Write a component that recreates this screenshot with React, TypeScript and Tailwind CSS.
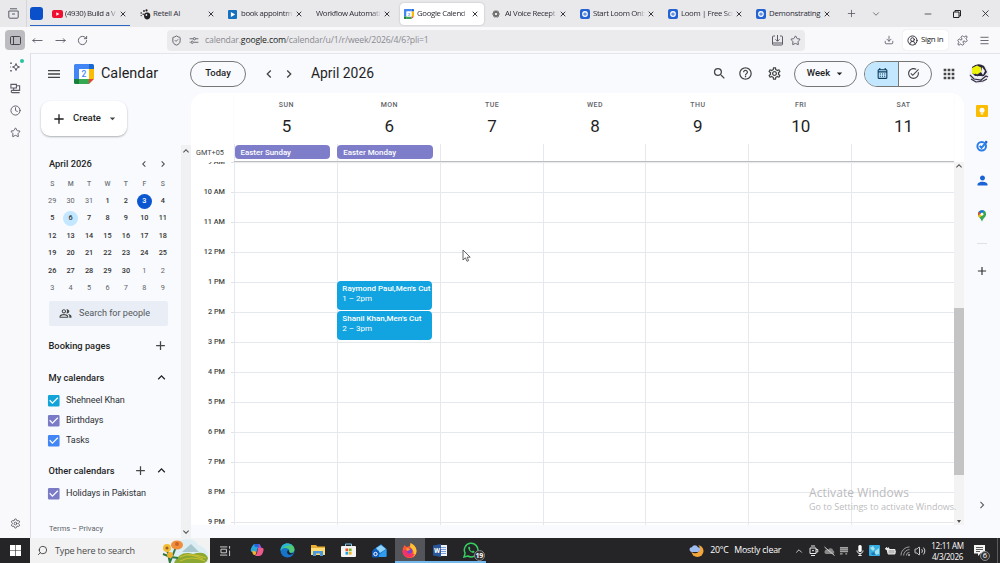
import type { ReactNode } from "react";
import clsx from "clsx";
import {
  MdAdd,
  MdApps,
  MdArrowDropDown,
  MdCheckBox,
  MdChevronLeft,
  MdChevronRight,
  MdHelpOutline,
  MdKeyboardArrowDown,
  MdKeyboardArrowUp,
  MdMenu,
  MdOutlineCalendarMonth,
  MdOutlinePeopleAlt,
  MdOutlineSettings,
  MdOutlineTaskAlt,
  MdPerson,
  MdSearch,
} from "react-icons/md";
import {
  ChevronDown,
  ChevronUp,
  CircleUserRound,
  Clock,
  Download,
  Menu,
  Minus,
  MoveLeft,
  MoveRight,
  Plus,
  Puzzle,
  RotateCw,
  Search,
  Settings,
  ShieldCheck,
  Star,
  Volume2,
  X,
} from "lucide-react";

const LoomIcon = () => (
  <svg viewBox="0 0 10 10" className="size-[10px]">
    <rect width="10" height="10" rx="2" fill="#2463d1" />
    <circle cx="5" cy="5" r="2.9" fill="#fff" />
    <circle cx="5" cy="5" r="1.6" fill="#2463d1" />
    <circle cx="5" cy="5" r="0.7" fill="#dce9ff" />
  </svg>
);

const YoutubeIcon = () => (
  <svg viewBox="0 0 11 8" className="h-[8px] w-[11px]">
    <rect width="11" height="8" rx="2" fill="#ee0f2f" />
    <path d="M4.3 2.2v3.6L7.4 4z" fill="#fff" />
  </svg>
);

const RetellIcon = () => (
  <svg viewBox="0 0 11 11" className="size-[11px]" fill="#222">
    <circle cx="1.2" cy="4" r="0.8" />
    <circle cx="1.2" cy="6.6" r="0.7" />
    <circle cx="3.2" cy="5.2" r="0.8" />
    <circle cx="4" cy="2" r="0.9" />
    <circle cx="6.5" cy="1.4" r="1.1" />
    <path d="M4 6.2C4 4 6 3 8 3.6c2 .5 2.6 2.3 2.2 4.2-.3 1.7-1.6 2.6-3.3 2.6C5 10.4 4 8.5 4 6.2z" />
    <circle cx="6.4" cy="6" r="0.9" fill="#e9e9ec" />
  </svg>
);

const BookIcon = () => (
  <svg viewBox="0 0 10 10" className="size-[9px]">
    <rect width="10" height="10" rx="1.2" fill="#1670c0" />
    <path d="M3.2 2.2 8 5 3.2 7.8z" fill="#fff" />
  </svg>
);

const AiIcon = () => (
  <svg viewBox="0 0 10 10" className="size-[8px]" fill="none" stroke="#666" strokeWidth="1.2">
    <ellipse cx="5" cy="5" rx="4.2" ry="2.2" />
    <ellipse cx="5" cy="5" rx="4.2" ry="2.2" transform="rotate(60 5 5)" />
    <ellipse cx="5" cy="5" rx="4.2" ry="2.2" transform="rotate(120 5 5)" />
  </svg>
);

function CalendarLogo({ className }: { className: string }) {
  return (
    <svg viewBox="0 0 20 20" className={className}>
      <path d="M1.5 0H15v5H5v10H0V1.5A1.5 1.5 0 0 1 1.5 0z" fill="#4285f4" />
      <path d="M15 0h3.5A1.5 1.5 0 0 1 20 1.5V5h-5z" fill="#1967d2" />
      <path d="M15 5h5v10h-5z" fill="#fbbc04" />
      <path d="M5 15h10v5H5z" fill="#34a853" />
      <path d="M0 15h5v5H1.5A1.5 1.5 0 0 1 0 18.5z" fill="#188038" />
      <path d="M15 15h5l-5 5z" fill="#ea4335" />
      <path d="M5 5h10v10H5z" fill="#fff" />
      <text x="10" y="13" textAnchor="middle" fontSize="8.5" fontWeight="500" fontFamily="Roboto, sans-serif" fill="#4285f4">
        2
      </text>
    </svg>
  );
}

interface TabItem {
  title: string;
  icon?: ReactNode;
  active?: boolean;
}

const tabs: TabItem[] = [
  { title: "(4930) Build a V", icon: <YoutubeIcon /> },
  { title: "Retell AI", icon: <RetellIcon /> },
  { title: "book appointm", icon: <BookIcon /> },
  { title: "Workflow Automati" },
  { title: "Google Calend", icon: <CalendarLogo className="size-[10px]" />, active: true },
  { title: "AI Voice Recept", icon: <AiIcon /> },
  { title: "Start Loom Onb", icon: <LoomIcon /> },
  { title: "Loom | Free Scr", icon: <LoomIcon /> },
  { title: "Demonstrating", icon: <LoomIcon /> },
];

function TabStrip() {
  return (
    <div className="flex h-[27px] items-center bg-[#e9e9ec] text-[#2b2a33]">
      <div className="flex h-full w-[27px] items-center justify-center border-r border-[#d5d5da]">
        <svg viewBox="0 0 11 11" className="size-[11px]" fill="none" stroke="#5b5b66">
          <path d="M2 .8h7M.8 3h9.4v6.2a1 1 0 0 1-1 1H1.8a1 1 0 0 1-1-1zM4 6h3" />
        </svg>
      </div>
      <div className="flex h-full w-[21px] flex-col pt-[7px]">
        <div className="ml-[3px] size-[13px] rounded-[3px] bg-[#0b50cb]" />
        <div className="mt-[5px] ml-[3px] h-px bg-[#2b66c4]" />
      </div>
      {tabs.map((tab, i) => (
        <div key={tab.title} className="flex h-full w-[88px] flex-col">
          <div
            className={clsx(
              "mt-[3px] flex h-[22px] w-[84px] items-center rounded-[4px] pl-[4px]",
              tab.active && "bg-white shadow-[0_0_2px_rgba(0,0,0,0.25)]",
            )}
          >
            {tab.icon && <span className="flex w-[13px] shrink-0 items-center">{tab.icon}</span>}
            <span
              className={clsx(
                "min-w-0 flex-1 text-[7.8px] whitespace-nowrap",
                i === 1 || i === 8 ? "tracking-[-0.25px]" : "tracking-[-0.35px] [mask-image:linear-gradient(to_right,black_85%,transparent)]",
              )}
            >
              {tab.title}
            </span>
            <X className="mr-[5px] ml-[2px] size-[8px] shrink-0" strokeWidth={2.8} />
          </div>
          {i === 0 && <div className="h-px w-[82px] bg-[#2b66c4]" />}
        </div>
      ))}
      <Plus className="ml-[6px] size-[11px] text-[#5b5b66]" strokeWidth={1.8} />
      <ChevronDown className="ml-[14px] size-[10px] text-[#5b5b66]" />
      <Minus className="ml-[42px] size-[10px]" strokeWidth={1.8} />
      <svg viewBox="0 0 8 8" className="ml-[20px] size-[8px]" fill="none" stroke="#222">
        <path d="M.5 2h5.5v5.5H.5zM2 2V.5h5.5V6H6" />
      </svg>
      <X className="ml-[19px] size-[11px]" strokeWidth={1.9} />
    </div>
  );
}

function NavBar() {
  return (
    <div className="flex h-[26px] items-center bg-[#f9f9fb] text-[#5b5b66]">
      <div className="ml-[5px] flex size-[20px] items-center justify-center rounded-[4px] bg-[#bdbdc1]">
        <svg viewBox="0 0 11 9" className="h-[9px] w-[11px]" fill="none" stroke="#45454d">
          <rect x=".5" y=".5" width="10" height="8" rx="1" />
          <path d="M3.5 .5v8" />
        </svg>
      </div>
      <MoveLeft className="ml-[7px] size-[11px]" />
      <MoveRight className="ml-[12px] size-[11px]" />
      <RotateCw className="ml-[11px] size-[11px]" />
      <div className="ml-[79px] flex h-[21px] w-[638px] items-center rounded-[4px] bg-[#ebebed] pl-[4px]">
        <ShieldCheck className="size-[11px]" />
        <svg viewBox="0 0 10 8" className="ml-[7px] h-[7px] w-[10px]" fill="none" stroke="#5b5b66">
          <path d="M0 2h4M7 2h3M0 6h1M5 6h5" />
          <circle cx="5.5" cy="2" r="1.3" />
          <circle cx="3" cy="6" r="1.3" />
        </svg>
        <span className="ml-[6px] flex-1 pt-[2px] text-[8.7px] tracking-[-0.17px] text-[#8a8a91]">
          calendar.<span className="text-[#222]">google.com</span>/calendar/u/1/r/week/2026/4/6?pli=1
        </span>
        <svg viewBox="0 0 11 11" className="size-[11px]" fill="none" stroke="#5b5b66">
          <path d="M3 1H1.5a1 1 0 0 0-1 1v7a1 1 0 0 0 1 1h8a1 1 0 0 0 1-1V2a1 1 0 0 0-1-1H8M.5 8h10M5.5 0v6M3.5 4.3l2 2 2-2" />
        </svg>
        <Star className="mr-[4px] ml-[7px] size-[11px]" />
      </div>
      <Download className="ml-[79px] size-[10px]" />
      <div className="ml-[9px] flex h-[20px] w-[45px] items-center rounded-[3px] bg-white pl-[4px] shadow-[0_0_1px_rgba(0,0,0,0.2)]">
        <CircleUserRound className="size-[11px] text-[#2b2a33]" />
        <span className="ml-[3px] text-[7.9px] tracking-[-0.3px] whitespace-nowrap text-[#15141a]">Sign in</span>
      </div>
      <Puzzle className="ml-[9px] size-[11px]" />
      <Menu className="ml-[11px] size-[11px]" />
    </div>
  );
}

function FirefoxRail() {
  return (
    <div className="flex w-[31px] flex-col items-center border-r border-[#dcdce2] bg-[#f9f9fb] pt-[8px] text-[#5b5b66]">
      <div className="relative">
        <svg viewBox="0 0 12 12" className="size-[12px]" fill="none" stroke="#5b5b66">
          <path d="M7 2.5 8 5l2.5 1L8 7 7 9.5 6 7 3.5 6 6 5zM2 1.5v1.5M1.2 2.2h1.6M2 9v1.5M1.2 9.8h1.6M1 6h.8" />
        </svg>
        <span className="absolute -top-[2px] -right-[3px] size-[4px] rounded-full bg-[#2ac3a2]" />
      </div>
      <svg viewBox="0 0 12 12" className="mt-[10px] size-[11px]" fill="none" stroke="#5b5b66">
        <path d="M1 1.5h6v4H1zM7 3h3.5v5H4V5.5M2 10.5h8.5M1.5 8v2.5M4 8H1.5" strokeWidth="1.2" />
      </svg>
      <Clock className="mt-[11px] size-[11px]" />
      <Star className="mt-[11px] size-[11px]" />
      <Settings className="mt-auto mb-[9px] size-[11px]" />
    </div>
  );
}

function CalendarHeader() {
  return (
    <header className="flex h-[39px] items-center text-[#1f1f1f]">
      <MdMenu className="ml-[15px] size-[16px] text-[#444746]" />
      <CalendarLogo className="ml-[12px] size-[20px]" />
      <span className="ml-[7px] w-[89px] text-[14.4px]">Calendar</span>
      <button className="h-[26px] w-[56px] rounded-full border border-[#747775] text-[9.5px] font-medium">Today</button>
      <MdChevronLeft className="ml-[15px] size-[16px] text-[#444746]" />
      <MdChevronRight className="ml-[4px] size-[16px] text-[#444746]" />
      <span className="ml-[14px] flex-1 text-[13.9px]">April 2026</span>
      <MdSearch className="size-[15px] text-[#444746]" />
      <MdHelpOutline className="ml-[11px] size-[15px] text-[#444746]" />
      <MdOutlineSettings className="ml-[14px] size-[15px] text-[#444746]" />
      <button className="ml-[12px] flex h-[26px] w-[63px] items-center justify-center rounded-full border border-[#747775] text-[9.5px] font-medium">
        Week
        <MdArrowDropDown className="-mr-[2px] ml-[3px] size-[13px]" />
      </button>
      <div className="ml-[7px] flex h-[26px] w-[68px] overflow-hidden rounded-full border border-[#747775] text-[#444746]">
        <div className="flex w-[34px] items-center justify-center border-r border-[#747775] bg-[#c2e7ff] pl-[2px] text-[#0b3a5c]">
          <MdOutlineCalendarMonth className="size-[13px]" />
        </div>
        <div className="flex flex-1 items-center justify-center pr-[4px]">
          <MdOutlineTaskAlt className="size-[13px]" />
        </div>
      </div>
      <MdApps className="ml-[9px] size-[16px] text-[#444746]" />
      <svg viewBox="0 0 20 20" className="mr-[11px] ml-[12px] size-[20px]">
        <circle cx="10" cy="10" r="9.8" fill="#eceaf2" />
        <path d="M3 3Q9-2 15 2l3 6-3 4-8 1-4-4z" fill="#29263c" />
        <path d="M3 4l5-2.5 4 2v4.5l-4 2.5-5-1z" fill="#eef20a" />
        <path d="M13 3l3 4-2 4-2-3zM5 12l8 0-2 3-4-1z" fill="#f1eff5" />
        <path d="M1 11l4 4 7 1 5-4 2 1M2 15l5 3 7-1 4-2M6 10l3 2" stroke="#302c42" strokeWidth="1.2" fill="none" />
      </svg>
    </header>
  );
}

const weeks = [
  [29, 30, 31, 1, 2, 3, 4],
  [5, 6, 7, 8, 9, 10, 11],
  [12, 13, 14, 15, 16, 17, 18],
  [19, 20, 21, 22, 23, 24, 25],
  [26, 27, 28, 29, 30, 1, 2],
  [3, 4, 5, 6, 7, 8, 9],
];

function MiniCalendar() {
  return (
    <div className="ml-[12px] w-[129px]">
      <div className="-mt-px flex h-[19px] items-center pl-[6px] text-[#1f1f1f]">
        <span className="flex-1 text-[9.3px] font-medium">April 2026</span>
        <MdChevronLeft className="size-[12px] text-[#444746]" />
        <MdChevronRight className="mr-[3px] ml-[7px] size-[12px] text-[#444746]" />
      </div>
      <div className="mt-[2px] grid grid-cols-7 text-center text-[7.3px]">
        {["S", "M", "T", "W", "T", "F", "S"].map((d, i) => (
          <span key={i} className="h-[17.5px] text-[6.8px] leading-[18.5px] font-medium text-[#70757a]">
            {d}
          </span>
        ))}
        {weeks.flat().map((d, i) => {
          const outside = i < 3 || i > 32;
          return (
            <span key={i} className="flex h-[17.5px] items-center justify-center">
              <span
                className={clsx(
                  "flex size-[15px] items-center justify-center rounded-full",
                  outside ? "text-[#5f6368]" : "font-medium text-[#333]",
                  i === 5 && "bg-[#0b57d0] text-white",
                  i === 8 && "bg-[#c2e7ff] text-[#004a77]",
                )}
              >
                {d}
              </span>
            </span>
          );
        })}
      </div>
    </div>
  );
}

function CalendarItem({ name, color }: { name: string; color: string }) {
  return (
    <div className="flex h-[20px] items-center">
      <MdCheckBox className="-ml-[2px] size-[15.5px]" color={color} />
      <span className="ml-[4.5px] text-[9.1px] tracking-[-0.1px] whitespace-nowrap text-[#303236]">{name}</span>
    </div>
  );
}

function Sidebar() {
  return (
    <aside className="flex w-[160px] flex-col">
      <button className="mt-[8px] ml-[10px] flex h-[35px] w-[86px] items-center rounded-[9px] bg-white text-[9.5px] font-medium text-[#1f1f1f] shadow-[0_1px_2px_rgba(60,64,67,0.4)]">
        <MdAdd className="ml-[10px] size-[16px]" />
        <span className="ml-[6px]">Create</span>
        <MdArrowDropDown className="ml-[5px] size-[13px] text-[#444746]" />
      </button>
      <div className="mt-[9px] flex h-[393px]">
        <div className="w-[150px] pt-[10px]">
          <MiniCalendar />
          <div className="mt-[3px] ml-[18px] flex h-[25px] w-[119px] items-center rounded-[2px] bg-[#e9eef6] text-[9.1px] text-[#53575b]">
            <MdOutlinePeopleAlt className="ml-[10px] size-[13px] text-[#444746]" />
            <span className="ml-[7px] pt-px">Search for people</span>
          </div>
          <div className="mt-[10px] ml-[17.5px] flex h-[20px] items-center text-[9.3px] font-medium text-[#1f1f1f]">
            <span className="w-[104px]">Booking pages</span>
            <MdAdd className="size-[15px] text-[#444746]" />
          </div>
          <div className="mt-[12px] ml-[17.5px] flex h-[20px] items-center text-[9.3px] font-medium text-[#1f1f1f]">
            <span className="w-[105px]">My calendars</span>
            <MdKeyboardArrowUp className="size-[15px]" />
          </div>
          <div className="mt-[3px] ml-[17px]">
            <CalendarItem name="Shehneel Khan" color="#12a4d9" />
            <CalendarItem name="Birthdays" color="#7b7ac6" />
            <CalendarItem name="Tasks" color="#4285f4" />
          </div>
          <div className="mt-[10px] ml-[17.5px] flex h-[20px] items-center text-[9.3px] font-medium text-[#1f1f1f]">
            <span className="w-[84px] whitespace-nowrap">Other calendars</span>
            <MdAdd className="size-[15px] text-[#444746]" />
            <MdKeyboardArrowUp className="ml-[6px] size-[15px]" />
          </div>
          <div className="mt-[3px] ml-[17px]">
            <CalendarItem name="Holidays in Pakistan" color="#7b7ac6" />
          </div>
          <div className="mt-[20px] ml-[18px] text-[7.5px] leading-[10px] text-[#5f6368]">Terms – Privacy</div>
        </div>
        <div className="flex w-[10px] flex-col items-center justify-between bg-[#f0f1f3] text-[#505050]">
          <MdKeyboardArrowUp className="size-[12px]" />
          <MdKeyboardArrowDown className="size-[12px]" />
        </div>
      </div>
    </aside>
  );
}

const days = [
  { name: "SUN", date: 5, allDay: "Easter Sunday" },
  { name: "MON", date: 6, allDay: "Easter Monday" },
  { name: "TUE", date: 7 },
  { name: "WED", date: 8 },
  { name: "THU", date: 9 },
  { name: "FRI", date: 10 },
  { name: "SAT", date: 11 },
];

const hours = ["9 AM", "10 AM", "11 AM", "12 PM", "1 PM", "2 PM", "3 PM", "4 PM", "5 PM", "6 PM", "7 PM", "8 PM", "9 PM"];

const events = [
  { title: "Raymond Paul,Men's Cut", time: "1 – 2pm", top: 118 },
  { title: "Shanil Khan,Men's Cut", time: "2 – 3pm", top: 148 },
];

function WeekView() {
  return (
    <main className="mb-[13px] flex w-[773px] flex-col overflow-hidden rounded-t-[14px] bg-white text-[#1f1f1f]">
      <div className="flex h-[69px]">
        <div className="w-[43px] pt-[54px] pl-[5px] text-[7.3px] leading-[11px] text-[#444746]">GMT+05</div>
        <div className="grid w-[720px] grid-cols-7 border-b border-[#b9bcc0] shadow-[0_1px_1px_rgba(0,0,0,0.08)]">
          {days.map((day) => (
            <div key={day.name} className="flex flex-col items-center">
              <span className="mt-[7px] pl-[2px] text-[7px] leading-[11px] font-medium tracking-[0.45px] text-[#5f6368]">{day.name}</span>
              <span className="mt-[4px] pl-[2px] text-[17px] leading-[22px]">{day.date}</span>
              <div className="mt-auto h-[17px] w-full border-l border-[#e5e8ec]">
                {day.allDay && (
                  <div className="mt-px -ml-[0.5px] h-[14px] w-[95.5px] rounded-[4px] bg-[#7e7dca] pl-[6px] text-[7.9px] leading-[15px] font-medium text-white">
                    {day.allDay}
                  </div>
                )}
              </div>
            </div>
          ))}
        </div>
      </div>
      <div className="flex h-[363px] overflow-hidden">
        <div className="-mt-[15px] w-[43px]">
          {hours.map((hour) => (
            <div key={hour} className="flex h-[30px] items-center text-[7.3px] text-[#444746]">
              <span className="flex-1 pt-px text-right font-medium">{hour}</span>
              <span className="ml-[6px] h-px w-[3px] bg-[#dfe3e8]" />
            </div>
          ))}
        </div>
        <div className="grid w-[720px] grid-cols-7 pt-px">
          {days.map((day) => (
            <div key={day.name} className="relative border-l border-[#e5e8ec]">
              {hours.slice(1).map((hour) => (
                <div key={hour} className="h-[30px] border-b border-[#e5e9ee]" />
              ))}
              {day.name === "MON" &&
                events.map((event) => (
                  <div
                    key={event.title}
                    className="absolute -left-px h-[29px] w-[95px] overflow-hidden rounded-[4px] bg-[#12a4e0] pt-[3px] pl-[5.5px] text-[8px] leading-[9.5px] whitespace-nowrap text-white"
                    style={{ top: event.top }}
                  >
                    <p className="font-medium">{event.title}</p>
                    <p>{event.time}</p>
                  </div>
                ))}
            </div>
          ))}
        </div>
        <div className="flex w-[10px] flex-col items-center bg-[#f3f3f4] text-[#505050]">
          <MdKeyboardArrowUp className="-mt-[2px] size-[12px] shrink-0" />
          <div className="mt-[136px] h-[167px] w-[10px] shrink-0 bg-[#c4c4c5]" />
          <svg viewBox="0 0 4 3" className="mt-[45px] h-[3px] w-[4px]">
            <path d="M0 0h4L2 3z" fill="#505050" />
          </svg>
        </div>
      </div>
    </main>
  );
}

function SidePanel() {
  return (
    <div className="flex w-[36px] flex-col items-center pt-[12px]">
      <svg viewBox="0 0 12 12" className="size-[12px]">
        <rect width="12" height="12" rx="1.2" fill="#fbbc04" />
        <circle cx="6" cy="5.3" r="2.5" fill="#fff" />
        <path d="M4.8 8.3h2.4v1.2H4.8z" fill="#fff" />
      </svg>
      <svg viewBox="0 0 12 12" className="mt-[23px] size-[12px]" fill="none">
        <circle cx="5.7" cy="6.3" r="4.3" stroke="#2b7de9" strokeWidth="2" />
        <path d="M3.7 5.9 5.5 7.7 10.5 2.2" stroke="#2b7de9" strokeWidth="2" />
        <path d="m9.5 1 1.7 1.6" stroke="#1558c0" strokeWidth="1.5" />
      </svg>
      <MdPerson className="mt-[21px] size-[15px] text-[#1a62d6]" />
      <svg viewBox="0 0 10 13" className="mt-[22px] h-[12px] w-[10px]">
        <path d="M5 .3A4.4 4.4 0 0 0 .6 4.7C.6 8 4 9 5 12.8 6 9 9.4 8 9.4 4.7A4.4 4.4 0 0 0 5 .3z" fill="#34a853" />
        <path d="M5 .3A4.4 4.4 0 0 0 1.6 2L4 4.2 7.5.9A4 4 0 0 0 5 .3z" fill="#1a73e8" />
        <path d="M1.6 2A4.4 4.4 0 0 0 .7 5.5L4 4.2z" fill="#ea4335" />
        <path d="M.8 6c.4 1 1 1.7 1.6 2.4L5.5 5.5 4 4z" fill="#fbbc04" />
        <circle cx="5" cy="4.6" r="1.5" fill="#fff" />
      </svg>
      <div className="mt-[21px] h-px w-[10px] bg-[#dfe1e5]" />
      <MdAdd className="mt-[20px] size-[14px] text-[#333]" />
      <MdChevronRight className="mt-auto mb-[26px] size-[14px] text-[#5f6368]" />
    </div>
  );
}

const apps: { name: string; state?: string; icon: ReactNode }[] = [
  {
    name: "Copilot",
    icon: (
      <svg viewBox="0 0 14 14" className="size-[14px]">
        <path d="M4 1h5L6.5 9H2.5C0 9 .5 6 2 3.5z" fill="#28a7dd" />
        <path d="M4 1h5l-.8 3H5z" fill="#2463d8" />
        <path d="M2.5 7.5 6.5 9 5.5 12C3 12 2 10.5 2.5 7.5z" fill="#f0b52e" />
        <path d="M8 5h4c2 0 2 2 .7 5-.7 2-2 3-3.7 3H5l2-3z" fill="#ec5b8b" />
        <path d="M9 1c1.5 0 1.5 3 3 4H8z" fill="#9859dc" />
      </svg>
    ),
  },
  {
    name: "Edge",
    icon: (
      <svg viewBox="0 0 16 16" className="size-[15px]">
        <circle cx="8" cy="8" r="7.5" fill="#1475ca" />
        <path d="M.6 8C1 3 4 .5 8 .5c4.5 0 7.5 3.2 7.5 6.5 0 2-1.5 3.5-3.5 3.5-3 0-2-1.5-2-2.5C10 5.5 3.5 3.5.6 8z" fill="#4fc878" />
        <path d="M.6 8C1 3 4 .5 8 .5c2 0 3.5.5 5 2C8 2 3.5 4 .6 8z" fill="#27b4df" />
        <path d="M9.5 8.5c0 2.5 3 3 5 2-1 1-2.5 2.5-4.5 2-3-1-3-4-1-5z" fill="#201f22" />
      </svg>
    ),
  },
  {
    name: "Explorer",
    icon: (
      <svg viewBox="0 0 14 12" className="h-[12px] w-[14px]">
        <path d="M0 1h5l1.5 1.5H14V11H0z" fill="#e9ae32" />
        <path d="M0 4h14v7H0z" fill="#ffdc76" />
        <path d="M2 7h10v5H9V9.5H5V12H2z" fill="#4a9add" />
      </svg>
    ),
  },
  {
    name: "Store",
    icon: (
      <svg viewBox="0 0 15 14" className="h-[14px] w-[15px]">
        <path d="M4.5 4V1h6v3" stroke="#7fc6ed" fill="none" />
        <rect y="3" width="15" height="11" rx="1" fill="#f4f4f4" />
        <path d="M4.5 5.5h2.7v2.7H4.5z" fill="#e8502b" />
        <path d="M7.9 5.5h2.7v2.7H7.9z" fill="#7bb51c" />
        <path d="M4.5 8.9h2.7v2.7H4.5z" fill="#1ea0e5" />
        <path d="M7.9 8.9h2.7v2.7H7.9z" fill="#f6b412" />
      </svg>
    ),
  },
  {
    name: "Mail",
    icon: (
      <svg viewBox="0 0 15 15" className="size-[15px]">
        <path d="m1 7 8-6 5.5 5v8H2z" fill="#1268c3" />
        <path d="m4 5 5-3 5 4-6 4z" fill="#8fd3fa" />
        <path d="M4 14 14.5 6v7q0 1-1.5 1z" fill="#2e9df0" />
        <rect y="7.5" width="7" height="7" rx="1" fill="#1057b7" />
        <circle cx="3.5" cy="11" r="1.7" stroke="#fff" fill="none" />
      </svg>
    ),
  },
  {
    name: "Firefox",
    state: "bg-[#54555a] border-[#76b9ed]",
    icon: (
      <svg viewBox="0 0 15 15" className="size-[15px]">
        <path d="M1 5 2.5 2l2 2L8 3l.5-3c3.5 1.5 6 4.5 6 8A7 7 0 0 1 .5 8.5z" fill="#ff5634" />
        <path d="M8.5 0c3.5 1.5 6 4.5 6 8a7 7 0 0 1-4 6c2-3 1.5-7-2.5-10z" fill="#ffc233" />
        <path d="M.5 8c.5 6 8 9 12.5 3-3 1-9 0-8-5z" fill="#f5316a" />
        <circle cx="7.7" cy="8" r="2.7" fill="#7c43c8" />
        <path d="M4 5.5c2-1.5 4 0 4 1.5L5 8z" fill="#ff9a26" />
      </svg>
    ),
  },
  {
    name: "Word",
    state: "border-[#76b9ed]",
    icon: (
      <svg viewBox="0 0 14 13" className="h-[13px] w-[14px]">
        <rect x="6" y="1" width="8" height="11" fill="#eef3fb" />
        <path d="M8 3.5h5M8 5.5h5M8 7.5h5M8 9.5h5" stroke="#5c86c9" strokeWidth=".8" />
        <path d="M0 1.5 8 0v13l-8-1.5z" fill="#2a5699" />
        <text x="4" y="9" textAnchor="middle" fontSize="7" fontWeight="700" fontFamily="Roboto, sans-serif" fill="#fff">
          W
        </text>
      </svg>
    ),
  },
  {
    name: "WhatsApp",
    state: "border-[#76b9ed]",
    icon: (
      <div className="relative">
        <svg viewBox="0 0 16 16" className="size-[16px]" fill="none" stroke="#35cf61">
          <path d="M1 15l1.1-3.8A6.8 6.8 0 1 1 4.8 14z" strokeWidth="1.5" />
          <path d="M5.5 4.8c-1 1.2.8 5.5 4.6 6.1 1 0 1.6-.8 1.5-1.5L10 8.6l-1 .8C8 9 7.2 8 6.8 7l.6-.8-.7-1.5z" fill="#35cf61" stroke="none" />
        </svg>
        <span className="absolute -right-[6px] -bottom-[3px] flex size-[11px] items-center justify-center rounded-full border border-[#888] bg-[#333] text-[7px] leading-none font-bold tracking-[-0.3px] text-white">
          19
        </span>
      </div>
    ),
  },
];

function Tray() {
  return (
    <div className="flex text-[#e8e8e8]">
      {[
        <ChevronUp className="size-[10px]" />,
        <svg viewBox="0 0 10 11" className="h-[11px] w-[10px]" fill="none" stroke="currentColor">
          <path d="M1 3h6v5.5H1zM7 4.5h1.8v2.5H7M2 1h4M2 10.5h4M3 5.7h2" />
        </svg>,
        <svg viewBox="0 0 11 10" className="h-[10px] w-[11px]">
          <path d="M.5 5.5C1 3 3 3 4 4c1-2.5 5-2 5 .5 2 .5 1.5 3.5 0 3.5H2C1 8 .3 7 .5 5.5z" fill="#8a8a8a" />
          <path d="m.5 1 10 8.5" stroke="#d0d0d0" />
        </svg>,
        <svg viewBox="0 0 11 10" className="h-[9px] w-[10px]" fill="#a5a5a5">
          <path d="M1 1h9v6H1zM1 8h3v1.5H1zM7 8h2v1.5H7z" />
          <path d="M1 3h9M1 5h9" stroke="#555" strokeWidth=".7" />
        </svg>,
        <svg viewBox="0 0 8 11" className="h-[11px] w-[8px]" fill="#fff">
          <rect x="2.3" width="3.4" height="7" rx="1.5" />
          <path d="M1 5.5c0 4 6 4 6 0M4 8.5V10.5M2.3 10.5h3.4" stroke="#eee" fill="none" />
        </svg>,
        <svg viewBox="0 0 11 11" className="size-[11px]">
          <rect width="11" height="11" rx="1" fill="#36aee4" />
          <path d="M1 3 4 1l2 3-2 2zM6 6l4-3v6l-4 1z" fill="#a4e0e5" />
          <path d="m2 8 3-1 2 3H3z" fill="#1e7bb7" />
        </svg>,
        <svg viewBox="0 0 11 8" className="h-[8px] w-[11px]" fill="#e8e8e8">
          <path d="M3 2.5h7v4.500H3z" stroke="#e8e8e8" fill="#bbb" />
          <path d="M10.300 4h.7v1.500h-.7zM0 1h1V0h.8v1h1V0h.8v1h.8v1.500L3 3.500v2H2v-2L.500 2.500z" />
        </svg>,
        <svg viewBox="0 0 11 11" className="size-[10px]" fill="none" stroke="#aaa">
          <path d="M1 10.5A9.5 9.5 0 0 1 10.5 1M4 10.5A6.5 6.5 0 0 1 10.5 4M7 10.5A3.5 3.5 0 0 1 10.5 7" />
          <circle cx="10" cy="10" r=".8" fill="#eee" />
        </svg>,
        <Volume2 className="size-[12px]" strokeWidth={1.8} />,
      ].map((icon, i) => (
        <span key={i} className="flex w-[15.2px] items-center justify-center">
          {icon}
        </span>
      ))}
    </div>
  );
}

function Taskbar() {
  return (
    <footer className="flex h-[25px] items-center bg-[#252426] text-white">
      <div className="flex w-[30px] justify-center">
        <svg viewBox="0 0 11 11" className="size-[11px]" fill="#fff">
          <path d="M0 0h5.2v5.2H0zM5.8 0H11v5.2H5.8zM0 5.8h5.2V11H0zM5.8 5.8H11V11H5.8z" />
        </svg>
      </div>
      <div className="flex h-full w-[180px] items-center bg-[#f2f2f3]">
        <Search className="ml-[7px] size-[11px] -scale-x-100 text-[#333]" strokeWidth={1.8} />
        <span className="ml-[7px] flex-1 text-[9.1px] tracking-[-0.2px] whitespace-nowrap text-[#4a4a4a]">Type here to search</span>
        <svg viewBox="0 0 48 25" className="h-[25px] w-[48px]">
          <path d="M8 10Q18 0 27 1q7 1 9 6 6 1 10 8v9H8z" fill="#dceef3" />
          <path d="m20 14 9-8 8 8z" fill="#a8c7cf" />
          <path d="M12 25q6-13 19-9 12-4 15 4-1 5-5 5z" fill="#8aa832" />
          <path d="M18 19q10-5 26 1M18 23q12-6 25 0M23 17q8-1 18 4" stroke="#c9bf30" strokeWidth="1.2" fill="none" />
          <path d="M14 9 8 24M5 11l3 14M6 18l-5-2M9 19l7 1" stroke="#2e7740" strokeWidth="2" fill="none" />
          <ellipse cx="15" cy="7" rx="6" ry="4.5" fill="#f08f3b" />
          <circle cx="15" cy="6" r="2" fill="#c9632b" />
          <circle cx="5" cy="10" r="4" fill="#f5bd34" />
          <circle cx="5" cy="10" r="1.6" fill="#99602a" />
          <circle cx="8" cy="17" r="3" fill="#f1b02d" />
        </svg>
      </div>
      <div className="mr-[2px] flex w-[30px] justify-center">
        <svg viewBox="0 0 12 11" className="h-[10px] w-[11px]" fill="none" stroke="#ddd">
          <path d="M0 1h8M1 3.5h6v4H1zM0 10h8M10.5 0v3M10.5 5v6" />
        </svg>
      </div>
      {apps.map((app) => (
        <div
          key={app.name}
          className={clsx("flex h-full w-[30.5px] items-center justify-center border-b-2 pt-[1px]", app.state ?? "border-transparent")}
        >
          {app.icon}
        </div>
      ))}
      <svg viewBox="0 0 16 16" className="ml-auto size-[15px]">
        <circle cx="9" cy="8.5" r="6.5" fill="#f4a63a" />
        <circle cx="6.5" cy="6" r="5" fill="#252426" />
        <path d="M3 9.5a2.5 2.5 0 0 1 0-5 3.5 3.5 0 0 1 6.5 0 2.5 2.5 0 0 1 0 5z" fill="#9fbcf0" />
      </svg>
      <span className="ml-[6px] w-[24px] text-[8.8px] tracking-[-0.3px]">20°C</span>
      <span className="mr-[10px] w-[47px] text-[8.8px] tracking-[-0.2px] whitespace-nowrap">Mostly clear</span>
      <Tray />
      <div className="w-[39px] text-center text-[8.1px] leading-[11px] tracking-[-0.35px] whitespace-nowrap">
        <p>12:11 AM</p>
        <p>4/3/2026</p>
      </div>
      <div className="relative mr-[11px] ml-[7px]">
        <svg viewBox="0 0 12 12" className="size-[12px]">
          <path d="M0 0h11v8.5H6.5L4 11V8.5H0z" fill="#f4f4f4" />
          <path d="M2 2.5h7M2 4.5h7M2 6.5h4" stroke="#333" strokeWidth=".8" />
        </svg>
        <span className="absolute -right-[4px] -bottom-[4px] flex size-[10px] items-center justify-center rounded-full border border-[#888] bg-[#333] text-[7.5px] leading-none">
          6
        </span>
      </div>
      <div className="mr-[2px] h-full w-px bg-[#5a5a5c]" />
    </footer>
  );
}

export default function App() {
  return (
    <div className="relative flex h-[563px] w-[1000px] flex-col overflow-hidden bg-[#f8fafd] font-['Open_Sans','Noto_Sans',sans-serif]">
      <TabStrip />
      <NavBar />
      <div className="flex h-[485px]">
        <FirefoxRail />
        <div className="flex flex-1 flex-col border-t border-[#e4e5ea] font-[Roboto,sans-serif]">
          <CalendarHeader />
          <div className="flex h-[445px]">
            <Sidebar />
            <WeekView />
            <SidePanel />
          </div>
        </div>
      </div>
      <Taskbar />
      <div className="absolute top-[485px] left-[809px] text-[#bcbcbe]">
        <p className="text-[12px] leading-[15px] tracking-[0.1px]">Activate Windows</p>
        <p className="text-[9px] leading-[13px] whitespace-nowrap">Go to Settings to activate Windows.</p>
      </div>
      <svg viewBox="0 0 9 13" className="absolute top-[249px] left-[462px] h-[13px] w-[9px]">
        <path d="M1 1v10l2.4-2.2L5 12.3l1.6-.7L5.2 8.2h3z" fill="#fff" stroke="#555" strokeWidth=".9" />
      </svg>
    </div>
  );
}
